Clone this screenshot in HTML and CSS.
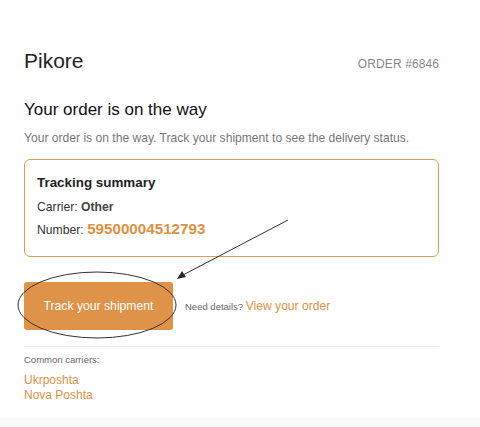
FILE: index.html
```html
<!DOCTYPE html>
<html lang="en">
<head>
<meta charset="utf-8">
<title>Pikore – Your order is on the way</title>
<link rel="stylesheet" href="styles.css">
</head>
<body>
<div class="page">
  <header class="top">
    <div class="brand">Pikore</div>
    <div class="order">ORDER #6846</div>
  </header>
  <h1 class="title">Your order is on the way</h1>
  <p class="lead">Your order is on the way. Track your shipment to see the delivery status.</p>
  <section class="summary">
    <h2 class="summary-title">Tracking summary</h2>
    <p class="row">Carrier: <strong class="carrier">Other</strong></p>
    <p class="row">Number: <strong class="number">59500004512793</strong></p>
  </section>
  <div class="actions">
    <a class="btn" href="#">Track your shipment</a>
    <span class="details">Need details? <a class="link" href="#">View your order</a></span>
  </div>
  <hr class="sep">
  <div class="carriers">
    <div class="carriers-label">Common carriers:</div>
    <a class="carrier-link" href="#">Ukrposhta</a>
    <a class="carrier-link" href="#">Nova Poshta</a>
  </div>
</div>
<div class="footer"></div>
<svg class="annot" width="480" height="427" viewBox="0 0 480 427" aria-hidden="true">
  <line x1="288" y1="220" x2="183" y2="275" stroke="#333" stroke-width="1"/>
  <polygon points="177,279 182,271 186,277" fill="#1f2a24"/>
  <ellipse cx="97" cy="305" rx="79" ry="33" fill="none" stroke="#333" stroke-width="1"/>
</svg>
</body>
</html>
```
FILE: styles.css
```css
* { box-sizing: border-box; }
html, body { margin: 0; padding: 0; }
body {
  background: #fff;
  font-family: "Liberation Sans", Arial, sans-serif;
  color: #222;
  width: 480px;
  height: 427px;
  overflow: hidden;
  position: relative;
}
.page {
  padding: 48px 41px 0 24px;
  height: 418px;
}
.top {
  display: flex;
  justify-content: space-between;
  align-items: baseline;
}
.brand {
  font-size: 21px;
  line-height: 25px;
  color: #222;
}
.order {
  font-size: 12px;
  color: #888;
  letter-spacing: 0.1px;
}
.title {
  margin: 26px 0 0;
  font-size: 17px;
  line-height: 22px;
  font-weight: 400;
  color: #111;
}
.lead {
  margin: 7px 0 0;
  font-size: 12.1px;
  line-height: 20px;
  color: #777;
  white-space: nowrap;
}
.summary {
  margin-top: 11px;
  border: 1px solid #e29a55;
  border-radius: 6px;
  padding: 13px 12px 15px;
}
.summary-title {
  margin: 0;
  font-size: 13.4px;
  line-height: 20px;
  font-weight: 700;
  color: #222;
}
.row {
  margin: 0;
  font-size: 12.2px;
  line-height: 22px;
  color: #333;
}
.summary-title + .row { margin-top: 3px; }
.carrier { font-weight: 700; color: #444; }
.number {
  font-size: 15.2px;
  font-weight: 700;
  color: #e0913f;
}
.actions {
  margin-top: 25px;
  display: flex;
  align-items: center;
  gap: 12px;
}
.btn {
  display: flex;
  align-items: center;
  justify-content: center;
  width: 149px;
  height: 48px;
  background: #de9348;
  color: #fff;
  border-radius: 3px;
  text-decoration: none;
  font-size: 12.2px;
}
.details {
  font-size: 9.5px;
  color: #666;
}
.link, .carrier-link {
  color: #e0913f;
  text-decoration: none;
}
.link { font-size: 12.1px; }
.sep {
  margin: 16px 0 0;
  border: 0;
  border-top: 1px solid #f0f0f0;
}
.carriers {
  margin-top: 6px;
  display: flex;
  flex-direction: column;
  align-items: flex-start;
}
.carriers-label {
  font-size: 9.5px;
  line-height: 14px;
  color: #666;
  margin-bottom: 6px;
}
.carrier-link {
  font-size: 12px;
  line-height: 15px;
}
.footer {
  height: 9px;
  background: #fafafa;
}
.annot {
  position: absolute;
  left: 0;
  top: 0;
  pointer-events: none;
}
```
